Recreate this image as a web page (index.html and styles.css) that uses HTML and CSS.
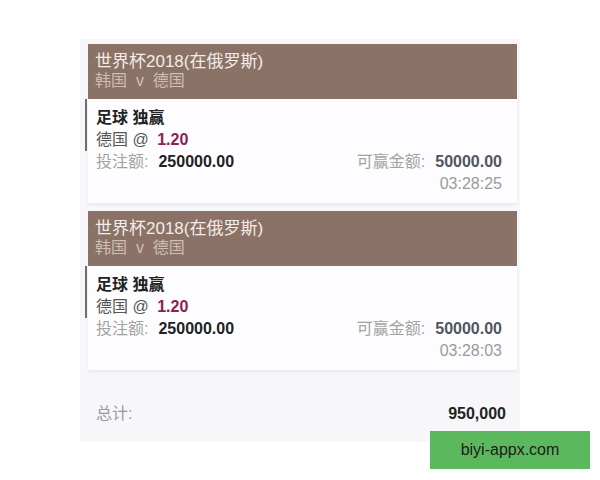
FILE: index.html
```html
<!DOCTYPE html>
<html lang="zh">
<head>
<meta charset="UTF-8">
<title>投注记录</title>
<link rel="stylesheet" href="styles.css">
</head>
<body>
<div class="panel">
  <div class="bet">
    <div class="bet-head">
      <div class="league">世界杯2018(在俄罗斯)</div>
      <div class="match">韩国&nbsp; v&nbsp; 德国</div>
    </div>
    <div class="bet-body">
      <div class="pick">
        <div class="market">足球 独赢</div>
        <div class="odds-line">德国 @ <span class="odds">1.20</span></div>
      </div>
      <div class="row">
        <div><span class="label">投注额:</span><span class="value">250000.00</span></div>
        <div><span class="label">可赢金额:</span><span class="value win">50000.00</span></div>
      </div>
      <div class="time">03:28:25</div>
    </div>
  </div>

  <div class="bet">
    <div class="bet-head">
      <div class="league">世界杯2018(在俄罗斯)</div>
      <div class="match">韩国&nbsp; v&nbsp; 德国</div>
    </div>
    <div class="bet-body">
      <div class="pick">
        <div class="market">足球 独赢</div>
        <div class="odds-line">德国 @ <span class="odds">1.20</span></div>
      </div>
      <div class="row">
        <div><span class="label">投注额:</span><span class="value">250000.00</span></div>
        <div><span class="label">可赢金额:</span><span class="value win">50000.00</span></div>
      </div>
      <div class="time">03:28:03</div>
    </div>
  </div>

  <div class="total">
    <span class="label">总计:</span>
    <span class="value">950,000</span>
  </div>
</div>

<div class="badge">biyi-appx.com</div>
</body>
</html>
```

FILE: styles.css
```css
body {
  margin: 0;
  padding: 39px 0 0 80px;
  background: #ffffff;
  font-family: "Liberation Sans", "Noto Sans CJK SC", sans-serif;
  font-size: 16px;
  line-height: 22px;
  color: #222;
}
.panel {
  width: 432px;
  padding: 5px 3px 0 5px;
  background: #f7f7fa;
}
.bet {
  margin: 0 0 8px 3px;
}
.bet-head {
  height: 55px;
  padding: 7px 7px 0;
  box-sizing: border-box;
  background: #8a7366;
}
.league {
  color: #f3ece8;
  font-size: 17px;
  line-height: 21px;
}
.match {
  color: #cdbdb4;
  font-size: 16px;
  line-height: 17px;
}
.bet-body {
  background: #fdfdff;
  padding: 0 15px 8px 8px;
  box-shadow: 0 2px 3px rgba(0, 0, 0, 0.06);
}
.pick {
  margin-left: -11px;
  padding: 8px 0 0 9px;
  border-left: 2px solid #707070;
}
.market {
  font-weight: bold;
}
.odds-line {
  color: #555;
}
.odds {
  color: #8c2252;
  font-weight: bold;
  margin-left: 4px;
}
.row {
  display: flex;
  justify-content: space-between;
}
.label {
  color: #a2a2a2;
  margin-right: 10px;
}
.value {
  font-weight: bold;
  color: #222;
}
.value.win {
  color: #505560;
}
.time {
  text-align: right;
  color: #9a9a9a;
}
.total {
  display: flex;
  justify-content: space-between;
  padding: 25px 11px 17px 11px;
}
.total .label {
  color: #9a9a9a;
}
.badge {
  position: absolute;
  left: 430px;
  top: 431px;
  width: 160px;
  height: 38px;
  line-height: 38px;
  text-align: center;
  background: #5cb85c;
  color: #1c1c1c;
  font-size: 16px;
}
```
